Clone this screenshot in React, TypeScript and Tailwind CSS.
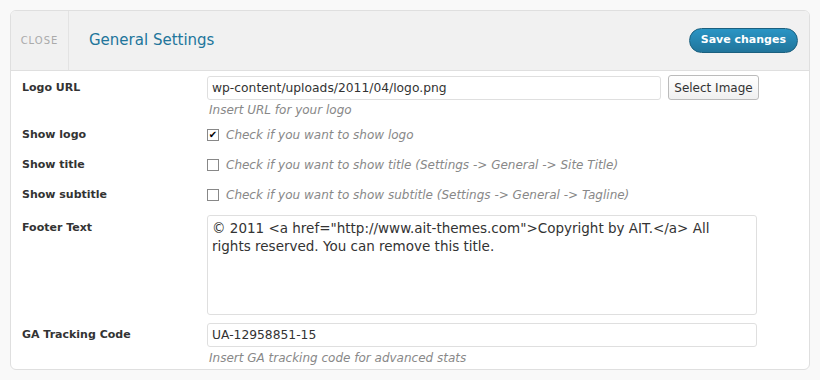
import React from 'react'

const font = { fontFamily: '"DejaVu Sans", Verdana, sans-serif' }

function Label({ children }: { children: React.ReactNode }) {
  return <div className="w-[196px] shrink-0 pl-[11px] text-[11px] font-bold text-[#333]">{children}</div>
}

function Help({ children }: { children: React.ReactNode }) {
  return <div className="text-[12px] italic text-[#888]">{children}</div>
}

function Check({ checked, text }: { checked?: boolean; text: string }) {
  return (
    <div className="flex items-center">
      <span className="flex h-[12px] w-[12px] items-center justify-center border border-[#888] bg-white text-[10px] leading-none text-black">
        {checked ? '✔' : ''}
      </span>
      <span className="ml-[7px] text-[12px] italic text-[#888]">{text}</span>
    </div>
  )
}

export default function App() {
  return (
    <div className="h-[380px] w-[820px] bg-[#f9f9f9] p-[10px]" style={font}>
      <div className="h-[360px] w-[800px] overflow-hidden rounded-[6px] border border-[#dfdfdf] bg-white">
        {/* Header */}
        <div className="flex h-[60px] items-center border-b border-[#dfdfdf] bg-[#f1f1f1]">
          <div className="flex h-full w-[58px] items-center justify-center border-r border-[#e3e3e3] text-[10px] tracking-[1px] text-[#aaa]">
            CLOSE
          </div>
          <div className="ml-[20px] flex-1 text-[15px] text-[#21759b]">General Settings</div>
          <button className="mr-[11px] h-[25px] rounded-full border border-[#1b607f] bg-gradient-to-b from-[#2a95c5] to-[#21759b] px-[11px] text-[11px] font-bold text-white">
            Save changes
          </button>
        </div>

        {/* Rows */}
        <div className="pt-[4px]">
          <div className="flex items-center">
            <div className="pt-[1px]">
              <Label>Logo URL</Label>
            </div>
            <input
              readOnly
              value="wp-content/uploads/2011/04/logo.png"
              className="h-[24px] w-[454px] rounded-[3px] border border-[#dfdfdf] px-[4px] text-[12.3px] text-[#333] outline-none"
              style={font}
            />
            <button className="ml-[7px] h-[25px] w-[91px] rounded-[3px] border border-[#bbb] bg-gradient-to-b from-white to-[#f0f0f0] text-[12px] text-[#333]">
              Select Image
            </button>
          </div>
          <div className="ml-[198px] mt-[1px] h-[17px]">
            <Help>Insert URL for your logo</Help>
          </div>
          <div className="mt-[2px] flex h-[30px] items-center">
            <Label>Show logo</Label>
            <Check checked text="Check if you want to show logo" />
          </div>
          <div className="flex h-[30px] items-center">
            <Label>Show title</Label>
            <Check text="Check if you want to show title (Settings -> General -> Site Title)" />
          </div>
          <div className="flex h-[30px] items-center">
            <Label>Show subtitle</Label>
            <Check text="Check if you want to show subtitle (Settings -> General -> Tagline)" />
          </div>
          <div className="mt-[5px] flex items-start">
            <div className="pt-[5px]">
              <Label>Footer Text</Label>
            </div>
            <textarea
              readOnly
              value={'© 2011 <a href="http://www.ait-themes.com">Copyright by AIT.</a> All rights reserved. You can remove this title.'}
              className="h-[100px] w-[550px] resize-none rounded-[3px] border border-[#dfdfdf] px-[4px] py-[3px] text-[13.5px] leading-[18px] text-[#333] outline-none"
              style={font}
            />
          </div>
          <div className="mt-[8px] flex items-center">
            <Label>GA Tracking Code</Label>
            <input
              readOnly
              value="UA-12958851-15"
              className="h-[24px] w-[550px] rounded-[3px] border border-[#dfdfdf] px-[4px] text-[12.3px] text-[#333] outline-none"
              style={font}
            />
          </div>
          <div className="ml-[198px] mt-[2px]">
            <Help>Insert GA tracking code for advanced stats</Help>
          </div>
        </div>
      </div>
    </div>
  )
}
